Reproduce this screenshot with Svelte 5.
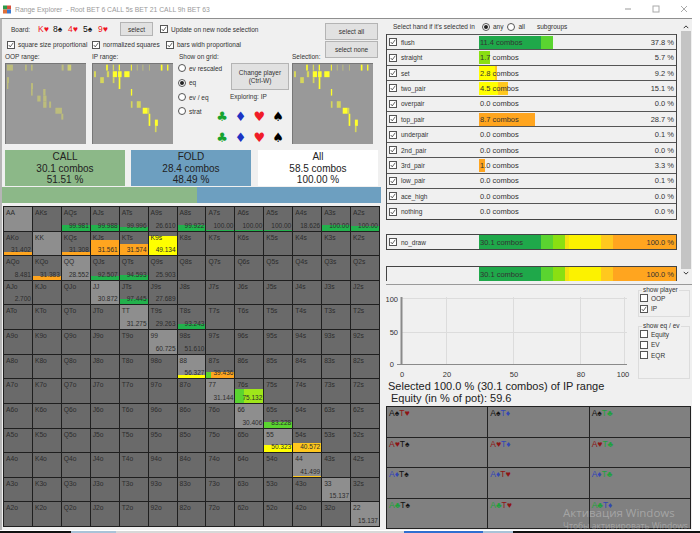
<script>
  const ranks = 'AKQJT98765432'.split('');
  const GR = '#22b14c', OR = '#ffa51f', YE = '#ffff00', AM = '#ffc81e', LI = '#5ad430', LM = '#9fe61a';
  const cells = {
    AQs: { v: '99.981', h: 6, s: [[GR, 1]] },
    AJs: { v: '99.988', h: 6, s: [[GR, 1]] },
    ATs: { v: '99.996', h: 4, s: [[GR, 1]] },
    A9s: { v: '26.610' },
    A8s: { v: '99.922', h: 6, s: [[GR, 1]] },
    A7s: { v: '100.00', h: 1, s: [[GR, 1]] },
    A6s: { v: '100.00', h: 1, s: [[GR, 1]] },
    A5s: { v: '100.00', h: 1, s: [[GR, 1]] },
    A4s: { v: '18.626' },
    A3s: { v: '100.00', h: 6, s: [[GR, 1]] },
    A2s: { v: '100.00', h: 5, s: [[GR, 1]] },
    AKo: { v: '31.402', h: 3, s: [[OR, 1]] },
    KQs: { v: '31.308', h: 3, s: [[OR, 1]] },
    KJs: { v: '31.561', h: 15, s: [[OR, 1]] },
    KTs: { v: '31.574', h: 11, s: [[OR, 1]] },
    K9s: { v: '49.134', h: 19, s: [[YE, 1]] },
    AQo: { v: '8.481' },
    KQo: { v: '31.383', h: 4, s: [[OR, 1]] },
    QQ: { v: '28.552' },
    QJs: { v: '92.507', h: 4, s: [[GR, 1]] },
    QTs: { v: '94.593', h: 5, s: [[GR, 1]] },
    Q9s: { v: '25.903' },
    AJo: { v: '2.700' },
    JJ: { v: '30.872' },
    JTs: { v: '97.445', h: 5, s: [[GR, 1]] },
    J9s: { v: '27.689' },
    TT: { v: '31.275' },
    T9s: { v: '29.263' },
    T8s: { v: '93.243', h: 5, s: [[GR, 1]] },
    '99': { v: '60.725' },
    '98s': { v: '51.610' },
    '88': { v: '56.327', h: 3, s: [[YE, 1]] },
    '87s': { v: '39.436', h: 6, s: [[LI, 15], [OR, 85]] },
    '77': { v: '31.144' },
    '76s': { v: '75.132', h: 14, s: [[LI, 30], [LM, 70]] },
    '66': { v: '30.406' },
    '65s': { v: '83.228', h: 6, s: [[LI, 1]] },
    '55': { v: '50.323', h: 7, s: [[YE, 1]] },
    '54s': { v: '40.572', h: 9, s: [[AM, 1]] },
    '44': { v: '41.499', h: 1, s: [[AM, 1]] },
    '33': { v: '15.137' },
    '22': { v: '15.137' }
  };
  const labelOf = (i, j) => i === j ? ranks[i] + ranks[i] : i < j ? ranks[i] + ranks[j] + 's' : ranks[j] + ranks[i] + 'o';
  const grid = ranks.flatMap((_, i) => ranks.map((_, j) => {
    const label = labelOf(i, j);
    return { label, pair: i === j, ...(cells[label] || {}) };
  }));

  const Y = '#ffff2a', P = '#d6d65c', Q = '#bcbc7c', R = '#cfcf74';
  const oop = [[3,2,18,18,Q],[58,2,5,18,Q],[76,2,5,18,Q],[169,2,6,18,Q],[187,2,11,18,R],[3,40,6,18,Q],[3,58,4,18,Q],[76,58,6,18,Q],[76,76,5,20,Q],[113,76,7,20,Q],[95,96,10,18,Q],[113,96,10,18,Q],[113,114,10,19,Q],[131,114,6,19,Q],[150,133,20,18,Q],[168,151,6,18,Q]];
  const ip = [[40,2,5,18,Y],[60,2,4,18,P],[78,2,4,18,Y],[115,2,3,18,Y],[133,2,3,18,Q],[150,2,3,18,Q],[170,2,3,18,Q],[206,2,5,18,Y],[225,2,4,18,Y],[3,22,6,18,P],[42,22,7,18,P],[60,22,13,18,Y],[76,22,11,18,Y],[95,22,16,18,Y],[22,40,11,18,P],[60,40,5,18,P],[78,40,5,36,Y],[115,76,4,20,Y],[115,113,5,20,P],[133,113,12,20,P],[151,133,15,18,Y],[166,133,5,18,P],[169,151,5,37,Y],[188,169,9,19,Y],[188,188,5,19,P]];

  const rows = [
    { n: 'flush', c: '11.4 combos', p: '37.8 %', s: [['#1fa84a', 62], [LI, 12]] },
    { n: 'straight', c: '1.7 combos', p: '5.7 %', s: [['#8adf12', 11]] },
    { n: 'set', c: '2.8 combos', p: '9.2 %', s: [[YE, 16], [AM, 2]] },
    { n: 'two_pair', c: '4.5 combos', p: '15.1 %', s: [[YE, 19], [AM, 10]] },
    { n: 'overpair', c: '0.0 combos', p: '0.0 %', s: [] },
    { n: 'top_pair', c: '8.7 combos', p: '28.7 %', s: [[OR, 56]] },
    { n: 'underpair', c: '0.0 combos', p: '0.1 %', s: [] },
    { n: '2nd_pair', c: '0.0 combos', p: '0.0 %', s: [] },
    { n: '3rd_pair', c: '1.0 combos', p: '3.3 %', s: [[OR, 6]] },
    { n: 'low_pair', c: '0.0 combos', p: '0.1 %', s: [] },
    { n: 'ace_high', c: '0.0 combos', p: '0.0 %', s: [] },
    { n: 'nothing', c: '0.0 combos', p: '0.0 %', s: [] }
  ];
  const full = [['#1fa84a', 62], [LI, 12], ['#8adf12', 12], ['#f4e010', 4], ['#fcf200', 32], [AM, 12], [OR, 63]];
  const combos = [
    [['A', '♠', 'k'], ['T', '♥', 'r']], [['A', '♠', 'k'], ['T', '♦', 'b']], [['A', '♠', 'k'], ['T', '♣', 'g']],
    [['A', '♥', 'r'], ['T', '♠', 'k']], [['A', '♥', 'r'], ['T', '♦', 'b']], [['A', '♥', 'r'], ['T', '♣', 'g']],
    [['A', '♦', 'b'], ['T', '♠', 'k']], [['A', '♦', 'b'], ['T', '♥', 'r']], [['A', '♦', 'b'], ['T', '♣', 'g']],
    [['A', '♣', 'g'], ['T', '♠', 'k']], [['A', '♣', 'g'], ['T', '♥', 'r']], [['A', '♣', 'g'], ['T', '♦', 'b']]
  ];
  const suits = [['♣', '#17a32f'], ['♦', '#1c33c4'], ['♥', '#f01c28'], ['♠', '#000']];
</script>

{#snippet cb(on)}
  <span class="cb">
    {#if on}<svg viewBox="0 0 8 8" width="6" height="6"><path d="M1 4l2 2.5L7 1" fill="none" stroke="#333" stroke-width="1"/></svg>{/if}
  </span>
{/snippet}

{#snippet radio(on)}
  <span class="radio" class:on></span>
{/snippet}

{#snippet heat(list)}
  <svg class="heat" viewBox="0 0 243 243">
    {#each list as r}<rect x={r[0]} y={r[1]} width={r[2]} height={r[3]} fill={r[4]} />{/each}
  </svg>
{/snippet}

{#snippet segs(s)}
  <span class="segs">
    {#each s as g}<i style:background={g[0]} style:width="{g[1]}px"></i>{/each}
  </span>
{/snippet}

<div class="page">
  <header class="title">
    <svg viewBox="0 0 8 8" width="8" height="9" class="logo">
      <rect width="4" height="4" fill="#2a9a4a"/><rect x="4" width="4" height="4" fill="#d8503a"/>
      <rect y="4" width="4" height="4" fill="#e0703a"/><rect x="4" y="4" width="4" height="4" fill="#3a7ad0"/>
    </svg>
    <span class="ttext">Range Explorer &nbsp;- Root BET 6 CALL 5s BET 21 CALL 9h BET 63</span>
    <span class="winbtns">
      <svg viewBox="0 0 8 8" width="8" height="8"><path d="M1 4h6" stroke="#999"/></svg>
      <svg viewBox="0 0 8 8" width="8" height="8"><rect x="1" y="1" width="6" height="6" fill="none" stroke="#aaa"/></svg>
      <svg viewBox="0 0 8 8" width="8" height="8"><path d="M1 1l6 6M7 1l-6 6" stroke="#aaa"/></svg>
    </span>
  </header>

  <main class="frame">
    <section class="left">
      <div class="top">
        <div class="topmain">
          <div class="boardrow">
            <span class="boardlabel">Board:</span>
            <span class="bc red">K♥</span><span class="bc">8♠</span><span class="bc red">4♥</span><span class="bc">5♠</span><span class="bc red">9♥</span>
            <button class="btn selbtn">select</button>
            <label class="chk up">{@render cb(true)}Update on new node selection</label>
          </div>
          <div class="checks">
            <label class="chk c1">{@render cb(true)}square size proportional</label>
            <label class="chk c2">{@render cb(true)}normalized squares</label>
            <label class="chk">{@render cb(true)}bars widh proportional</label>
          </div>
        </div>
        <div class="allnone">
          <button class="btn">select all</button>
          <button class="btn">select none</button>
        </div>
      </div>

      <div class="ranges">
        <div class="rg w87"><div class="cap">OOP range:</div>{@render heat(oop)}</div>
        <div class="rg w85"><div class="cap">IP range:</div>{@render heat(ip)}</div>
        <div class="mid">
          <div class="cap capmid">Show on grid:</div>
          <div class="midbody">
            <div class="radios">
              <label>{@render radio(false)}ev rescaled</label>
              <label>{@render radio(true)}eq</label>
              <label>{@render radio(false)}ev / eq</label>
              <label>{@render radio(false)}strat</label>
            </div>
            <div class="midright">
              <button class="btn change">Change player<br />(Ctrl-W)</button>
              <div class="exploring">Exploring: IP</div>
              <div class="suits">
                {#each [...suits, ...suits] as g}<span style:color={g[1]}>{g[0]}</span>{/each}
              </div>
            </div>
          </div>
        </div>
        <div class="rg"><div class="cap">Selection:</div>{@render heat(ip)}</div>
      </div>

      <div class="stats">
        <div class="stat call">CALL<br />30.1 combos<br />51.51 %</div>
        <div class="stat fold">FOLD<br />28.4 combos<br />48.49 %</div>
        <div class="stat all">All<br />58.5 combos<br />100.00 %</div>
      </div>
      <div class="ratio"><span></span></div>

      <div class="grid">
        {#each grid as c}
          <div class="cell" class:pair={c.pair}>
            {#if c.s}
              <span class="cellbar" style:height="{c.h}px">
                {#each c.s as g}<i style:background={g[0]} style:flex-grow={g[1]}></i>{/each}
              </span>
            {/if}
            <span class="lbl">{c.label}</span>
            {#if c.v}<span class="val">{c.v}</span>{/if}
          </div>
        {/each}
      </div>
    </section>

    <section class="right">
      <div class="upper">
        <div class="listarea">
          <div class="listhead">
            <span class="lh1">Select hand if it's selected in</span>
            <label class="lhr">{@render radio(true)}any</label>
            <label class="lhr">{@render radio(false)}all</label>
            <span class="lh2">subgroups</span>
          </div>
          <div class="tbl">
            {#each rows as r}
              <div class="row">
                <label class="rname">{@render cb(true)}{r.n}</label>
                <div class="rbar">
                  {@render segs(r.s)}
                  <span class="rc">{r.c}</span><span class="rp">{r.p}</span>
                </div>
              </div>
            {/each}
          </div>
          <div class="tbl single">
            <div class="row">
              <label class="rname">{@render cb(true)}no_draw</label>
              <div class="rbar">{@render segs(full)}<span class="rc">30.1 combos</span><span class="rp">100.0 %</span></div>
            </div>
          </div>
          <div class="tbl total">
            <div class="row">
              <div class="rname"></div>
              <div class="rbar">{@render segs(full)}<span class="rc">30.1 combos</span><span class="rp">100.0 %</span></div>
            </div>
          </div>
        </div>
        <div class="scroll">
          <svg viewBox="0 0 8 5" width="6" height="4"><path d="M1 4l3-3 3 3" fill="none" stroke="#333" stroke-width="1.3"/></svg>
          <div class="thumb"></div>
          <svg viewBox="0 0 8 5" width="6" height="4"><path d="M1 1l3 3 3-3" fill="none" stroke="#333" stroke-width="1.3"/></svg>
        </div>
      </div>

      <div class="chartpanel">
        <div class="chartrow">
          <svg class="chart" viewBox="0 0 250 97" width="250" height="97">
            <g stroke="#dcdcdc" stroke-width="1">
              <path d="M60.5 12V79M127.5 12V79M194.5 12V79M238.5 12V79M16 13.5H241M16 47.5H241" />
            </g>
            <path d="M15.5 12V80" stroke="#8a8a8a" stroke-width="2"/>
            <path d="M11 79.5H241" stroke="#8a8a8a" stroke-width="1"/>
            <g class="ax">
              <text x="12" y="17" text-anchor="end">100</text>
              <text x="12" y="50" text-anchor="end">50</text>
              <text x="8" y="82" text-anchor="end">0</text>
              <text x="16" y="92" text-anchor="middle">0</text>
              <text x="61" y="92" text-anchor="middle">20</text>
              <text x="128" y="92" text-anchor="middle">50</text>
              <text x="195" y="92" text-anchor="middle">80</text>
              <text x="237" y="92" text-anchor="middle">100</text>
            </g>
          </svg>
          <div class="groups">
            <fieldset class="g1">
              <legend>show player</legend>
              <label>{@render cb(false)}OOP</label>
              <label>{@render cb(true)}IP</label>
            </fieldset>
            <fieldset class="g2">
              <legend>show eq / ev</legend>
              <label>{@render cb(false)}Equity</label>
              <label>{@render cb(false)}EV</label>
              <label>{@render cb(false)}EQR</label>
            </fieldset>
          </div>
        </div>
        <div class="sel1">Selected 100.0 % (30.1 combos) of IP range</div>
        <div class="sel2">Equity (in % of pot): 59.6</div>
      </div>

      <div class="combos">
        {#each combos as c}
          <div class="combo">
            {#each c as h}<span class={h[2]}>{h[0]}{h[1]}</span>{/each}
          </div>
        {/each}
      </div>
    </section>

    <div class="wm">
      <div class="wm1">Активация Windows</div>
      <div class="wm2">Чтобы активировать Windows, п</div>
    </div>
  </main>
  <footer class="taskbar"><i class="t1"></i><i class="t2"></i><i class="t3"></i><i class="t4"></i><i class="t5"></i><i class="t6"></i></footer>
</div>

<style>
  :global(body) { margin: 0; background: #fff; }
  .page { width: 700px; height: 533px; overflow: hidden; display: flex; flex-direction: column; font-family: "Liberation Sans", Arial, sans-serif; font-size: 6.5px; color: #333; }
  .title { height: 18px; flex: none; display: flex; align-items: center; padding-left: 3px; box-sizing: border-box; }
  .logo { flex: none; }
  .ttext { margin-left: 4px; font-size: 6.8px; color: #9a9a9a; white-space: nowrap; }
  .winbtns { margin-left: auto; display: flex; gap: 20px; padding-right: 12px; }

  .frame { position: relative; width: 692px; height: 512px; flex: none; box-sizing: border-box; background: #f0f0f0; border-top: 1px solid #8f8f8f; border-left: 2px solid #b5b5b5; display: flex; }
  .left { width: 382px; flex: none; box-sizing: border-box; }
  .top { display: flex; height: 33px; }
  .topmain { width: 321px; flex: none; }
  .boardrow { display: flex; align-items: center; height: 14px; margin-top: 3px; padding-left: 9px; white-space: nowrap; }
  .boardlabel { width: 27px; }
  .bc { width: 15px; font-size: 8.5px; color: #111; font-family: "Liberation Sans", "DejaVu Sans", sans-serif; }
  .bc.red { color: #f0141e; }
  .btn { font: 6.5px "Liberation Sans", Arial, sans-serif; color: #333; background: #e1e1e1; border: 1px solid #b4b4b4; padding: 0; margin: 0; display: block; }
  .selbtn { width: 33px; height: 14px; margin-left: 7px; }
  .chk { display: inline-flex; align-items: center; white-space: nowrap; }
  .up { margin-left: 7px; }
  .checks { display: flex; padding-left: 5px; margin-top: 3px; height: 11px; align-items: center; }
  .c1 { width: 85px; }
  .c2 { width: 74px; }
  .cb { width: 8px; height: 8px; flex: none; box-sizing: border-box; border: 1px solid #555; background: #fff; margin-right: 3px; display: inline-flex; align-items: center; justify-content: center; }
  .radio { width: 8px; height: 8px; flex: none; box-sizing: border-box; border: 1px solid #555; border-radius: 50%; background: #fff; margin-right: 3px; display: inline-flex; align-items: center; justify-content: center; }
  .radio.on::after { content: ""; width: 4px; height: 4px; border-radius: 50%; background: #222; }
  .allnone { height: 36px; width: 54px; flex: none; padding-top: 4px; box-sizing: border-box; margin-left: 2px; }
  .allnone .btn { width: 53px; height: 17px; margin-bottom: 1px; }

  .ranges { display: flex; padding-left: 3px; height: 98px; }
  .w87 { width: 87px; flex: none; }
  .w85 { width: 85px; flex: none; }
  .cap { height: 10px; line-height: 10px; margin-bottom: 1px; white-space: nowrap; }
  .heat { display: block; width: 81px; height: 81px; background: #999; box-sizing: border-box; border-left: 1px solid #777; border-top: 1px solid #777; }
  .mid { width: 115px; flex: none; padding-left: 2px; box-sizing: border-box; }
  .midbody { display: flex; }
  .radios { width: 43px; flex: none; display: flex; flex-direction: column; gap: 5.8px; padding-top: 1px; margin-left: -1px; }
  .radios label { display: flex; align-items: center; height: 8.6px; white-space: nowrap; }
  .midright { flex: none; }
  .change { width: 58px; height: 27px; margin-left: 10px; line-height: 8px; }
  .exploring { margin: 2px 0 0 9px; height: 9px; line-height: 9px; }
  .suits { display: grid; grid-template-columns: repeat(4, 18.7px); grid-auto-rows: 21px; margin-top: 5px; font: 13px/21px "DejaVu Sans", sans-serif; text-align: center; width: 75px; margin-left: -8.4px; }

  .stats { display: flex; gap: 6px; padding-left: 3px; }
  .stat { width: 120px; height: 36px; font-size: 10px; line-height: 11.5px; text-align: center; color: #222; box-sizing: border-box; padding-top: 1px; }
  .call { background: #8cb888; }
  .fold { background: #6d9fc0; }
  .all { background: #fff; margin-left: 1px; }
  .ratio { height: 16px; margin-top: 1px; background: #6d9fc0; width: 379px; }
  .ratio span { display: block; width: 195px; height: 100%; background: #8cb888; }

  .grid { margin-top: 3px; margin-left: 1px; width: 377px; height: 321px; padding: 1px; box-sizing: border-box; background: #1f1f1f; display: grid; grid-template-columns: repeat(13, 1fr); grid-template-rows: repeat(13, 1fr); gap: 1px; }
  .cell { position: relative; background: #6a6a6a; overflow: hidden; display: flex; flex-direction: column; justify-content: space-between; min-width: 0; min-height: 0; }
  .cell.pair { background: #8e8e8e; }
  .cellbar { position: absolute; left: 0; right: 0; bottom: 0; display: flex; }
  .cellbar i { display: block; flex-basis: 0; }
  .lbl { position: relative; font-size: 6.7px; line-height: 9px; padding: 1px 0 0 2px; color: #2c2c2c; }
  .val { position: relative; font-size: 6.5px; line-height: 8px; text-align: right; padding: 0 1px 1px 0; color: #2c2c2c; }

  .right { width: 306px; margin-left: 2px; flex: none; display: flex; flex-direction: column; }
  .upper { display: flex; height: 262px; flex: none; overflow: hidden; }
  .listarea { width: 291px; flex: none; }
  .listhead { height: 15px; display: flex; align-items: center; padding-left: 7px; white-space: nowrap; }
  .lh1 { width: 89px; }
  .lhr { display: inline-flex; align-items: center; margin-right: 4px; }
  .lh2 { margin-left: 8px; }
  .tbl { width: 291px; box-sizing: border-box; border: 1px solid #444; border-top: 0; background: #f0f0f0; }
  .single { margin-top: 14px; border-top: 1px solid #444; }
  .total { margin-top: 15.6px; border-top: 1px solid #444; border-bottom: 0; }
  .row { display: flex; height: 15.42px; box-sizing: border-box; border-top: 1px solid #555; }
  .tbl.single .row, .tbl.total .row { border-top: 0; height: 14.4px; }
  .rname { width: 92px; flex: none; display: flex; align-items: center; padding-left: 2px; box-sizing: border-box; }
  .rname :global(.cb) { margin-right: 4px; }
  .rbar { position: relative; flex: 1; display: flex; align-items: center; justify-content: space-between; padding: 0 2px 0 1px; font-size: 7.5px; color: #333; }
  .rc, .rp { position: relative; white-space: nowrap; }
  .segs { position: absolute; left: 0; top: 0.5px; bottom: 0.5px; display: flex; }
  .segs i { display: block; height: 100%; }
  .scroll { width: 13px; margin-left: 2px; display: flex; flex-direction: column; align-items: center; padding-top: 6px; box-sizing: border-box; height: 262px; }
  .scroll .thumb { width: 10px; height: 238px; background: #c4c4c4; margin: 2px 0; }

  .chartpanel { height: 122px; margin-top: 3px; border-top: 1px solid #999; flex: none; box-sizing: border-box; }
  .chartrow { display: flex; height: 95px; }
  .chart { flex: none; }
  .ax text { font: 7.5px "Liberation Sans", Arial, sans-serif; fill: #333; }
  .groups { margin-left: 2px; display: flex; flex-direction: column; gap: 6px; width: 52px; padding-top: 2px; }
  fieldset { margin: 0; padding: 0 0 0 1px; border: 1px solid #dcdcdc; display: flex; flex-direction: column; font-size: 6.5px; box-sizing: border-box; }
  fieldset label { display: flex; align-items: center; height: 10.5px; }
  legend { font-size: 6.5px; padding: 0 1px; margin-left: 2px; line-height: 6px; }
  .g1 { height: 30px; }
  .g2 { height: 56px; }
  .sel1 { font-size: 11px; line-height: 12px; padding-left: 2px; color: #222; white-space: nowrap; }
  .sel2 { font-size: 11px; line-height: 12px; padding-left: 5px; color: #222; white-space: nowrap; }

  .combos { width: 305px; height: 123px; box-sizing: border-box; background: #222; padding: 1px; display: grid; grid-template-columns: repeat(3, 1fr); grid-template-rows: repeat(4, 1fr); gap: 1px; }
  .combo { background: #808080; font-size: 8.5px; line-height: 8px; padding: 2px 2px; font-family: "Liberation Sans", "DejaVu Sans", sans-serif; white-space: nowrap; }
  .k { color: #111; }
  .r { color: #8e1414; }
  .b { color: #3346b4; }
  .g { color: #1ea23c; }

  .wm { position: absolute; left: 561px; top: 489px; color: rgba(255, 255, 255, 0.3); white-space: nowrap; }
  .wm1 { font: 11.5px/9px "Open Sans", sans-serif; }
  .wm2 { font: 8.5px/10px "Open Sans", sans-serif; margin-top: 4px; }
  .taskbar { display: flex; height: 2px; margin-top: 1px; flex: none; }
  .taskbar i { display: block; height: 100%; }
  .t1 { width: 71px; background: #111; }
  .t2 { width: 45px; background: #a9c3d8; }
  .t3 { width: 288px; background: #d8d8d8; }
  .t4 { width: 79px; background: #2f6fd0; }
  .t5 { width: 30px; background: #a9c3d8; }
  .t6 { flex: 1; background: #111; }
</style>
